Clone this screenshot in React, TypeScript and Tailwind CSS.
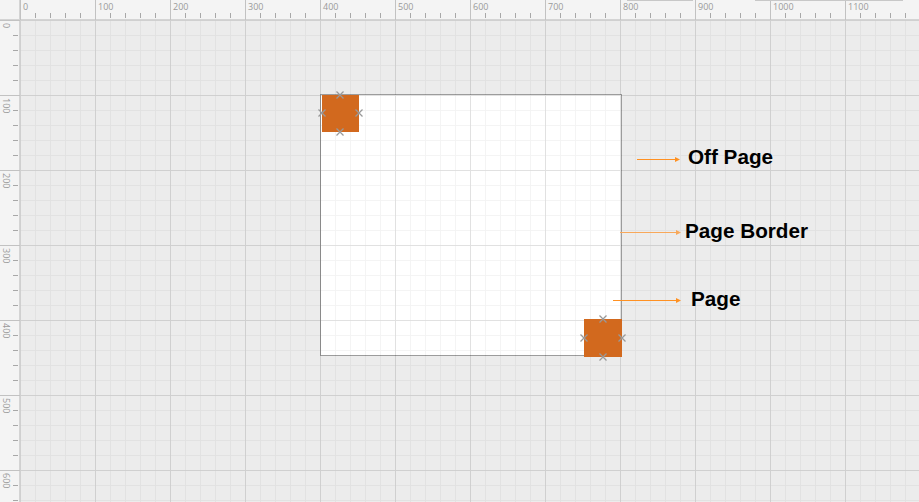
import React from "react";

const W = 899;
const H = 482;

function TopRuler() {
  const majors = Array.from({ length: 12 }, (_, i) => i);
  const minors = Array.from({ length: 60 }, (_, i) => i).filter((i) => i % 5 !== 0);
  return (
    <svg width={W} height={20} className="block">
      <rect x={0} y={0} width={W} height={20} fill="#f4f4f4" />
      <line x1={0} y1={19.5} x2={W} y2={19.5} stroke="#d4d4d4" />
      {majors.map((i) => (
        <g key={i}>
          <line x1={i * 75 + 0.5} y1={0} x2={i * 75 + 0.5} y2={20} stroke="#c2c2c2" />
          <text x={i * 75 + 3} y={10} fontSize={9} fill="#9a9a9a" fontFamily="'Open Sans', sans-serif">
            {i * 100}
          </text>
        </g>
      ))}
      {minors.map((i) => (
        <line key={i} x1={i * 15 + 0.5} y1={13} x2={i * 15 + 0.5} y2={18} stroke="#a8a8a8" />
      ))}
    </svg>
  );
}

function LeftRuler() {
  const majors = Array.from({ length: 7 }, (_, i) => i);
  const minors = Array.from({ length: 33 }, (_, i) => i).filter((i) => i % 5 !== 0);
  return (
    <svg width={20} height={H} className="block">
      <rect x={0} y={0} width={20} height={H} fill="#f4f4f4" />
      <line x1={19.5} y1={0} x2={19.5} y2={H} stroke="#d4d4d4" />
      {majors.map((i) => (
        <g key={i}>
          <line x1={0} y1={i * 75 + 0.5} x2={20} y2={i * 75 + 0.5} stroke="#c2c2c2" />
          <text
            x={0}
            y={0}
            fontSize={9}
            fill="#9a9a9a"
            fontFamily="'Open Sans', sans-serif"
            transform={`translate(3 ${i * 75 + 3}) rotate(90)`}
          >
            {i * 100}
          </text>
        </g>
      ))}
      {minors.map((i) => (
        <line key={i} x1={13} y1={i * 15 + 0.5} x2={18} y2={i * 15 + 0.5} stroke="#a8a8a8" />
      ))}
    </svg>
  );
}

function Grid() {
  return (
    <svg width={W} height={H} className="absolute left-0 top-0">
      <defs>
        <pattern id="minor" width={15} height={15} patternUnits="userSpaceOnUse">
          <path d="M 15 0 L 0 0 0 15" fill="none" stroke="rgba(0,0,0,0.045)" strokeWidth={1} transform="translate(0.5 0.5)" />
        </pattern>
        <pattern id="major" width={75} height={75} patternUnits="userSpaceOnUse">
          <rect width={75} height={75} fill="url(#minor)" />
          <path d="M 75 0 L 0 0 0 75" fill="none" stroke="rgba(0,0,0,0.08)" strokeWidth={1} transform="translate(0.5 0.5)" />
        </pattern>
      </defs>
      <rect width={W} height={H} fill="url(#major)" />
    </svg>
  );
}

function Port({ x, y }: { x: number; y: number }) {
  return (
    <svg width={10} height={10} className="absolute" style={{ left: x - 5, top: y - 5 }}>
      <path d="M1.5 1.5 L8.5 8.5 M8.5 1.5 L1.5 8.5" stroke="#999999" strokeWidth={1.3} />
    </svg>
  );
}

function Node({ left, top }: { left: number; top: number }) {
  const s = 37.5;
  return (
    <>
      <div className="absolute bg-[#d2691e]" style={{ left, top, width: s, height: s }} />
      <Port x={left + s / 2} y={top} />
      <Port x={left} y={top + s / 2} />
      <Port x={left + s} y={top + s / 2} />
      <Port x={left + s / 2} y={top + s} />
    </>
  );
}

function Arrow({ x1, x2, y, color }: { x1: number; x2: number; y: number; color: string }) {
  return (
    <svg width={x2 - x1 + 2} height={9} className="absolute" style={{ left: x1, top: y - 4.5 }}>
      <line x1={0} y1={4.5} x2={x2 - x1 - 3} y2={4.5} stroke={color} strokeWidth={1} />
      <path d={`M${x2 - x1 - 5} 2 L${x2 - x1} 4.5 L${x2 - x1 - 5} 7 Z`} fill={color} />
    </svg>
  );
}

export default function App() {
  return (
    <div className="w-[919px] h-[502px] overflow-hidden bg-[#ececec] flex flex-col font-['Liberation_Sans',Arial,sans-serif]">
      <div className="flex h-[20px] shrink-0">
        <div className="w-[20px] h-[20px] bg-[#f4f4f4] border-r border-b border-[#d4d4d4] shrink-0" />
        <div className="relative">
          <TopRuler />
          <div className="absolute left-[607px] top-0 w-[66px] h-[1px] bg-[#c8c8c8]" />
          <div className="absolute left-[735px] top-0 w-[148px] h-[1px] bg-[#c8c8c8]" />
        </div>
      </div>
      <div className="flex flex-1">
        <div className="shrink-0">
          <LeftRuler />
        </div>
        <div className="relative flex-1 bg-[#ececec] overflow-hidden">
          <div className="absolute left-[300px] top-[74px] w-[302px] h-[262px] bg-white border border-[#9c9c9c]" />
          <Grid />
          <Node left={301.5} top={74.5} />
          <Node left={564.3} top={299} />

          <Arrow x1={617} x2={660} y={139.3} color="#ff9122" />
          <Arrow x1={600} x2={661} y={212.7} color="#f8a85a" />
          <Arrow x1={593} x2={661} y={280.3} color="#ff9122" />

          <div className="absolute left-[668px] top-[127px] text-[20.7px] leading-none font-bold text-black">Off Page</div>
          <div className="absolute left-[665px] top-[200.5px] text-[20.7px] leading-none font-bold text-black">Page Border</div>
          <div className="absolute left-[671px] top-[268.5px] text-[20.7px] leading-none font-bold text-black">Page</div>
        </div>
      </div>
    </div>
  );
}
